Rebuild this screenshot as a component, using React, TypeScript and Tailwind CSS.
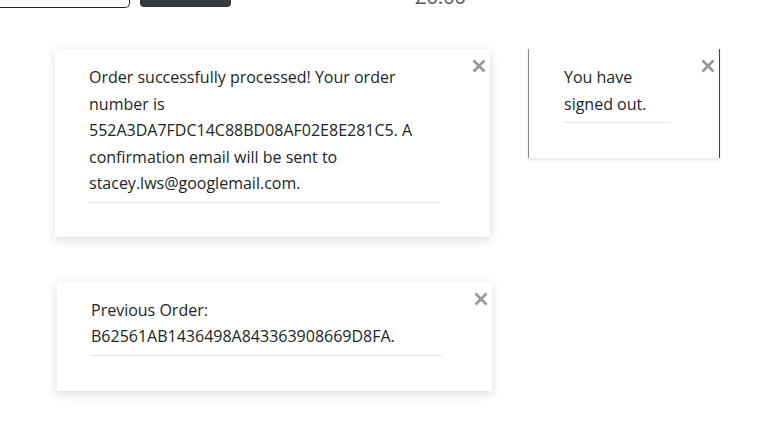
import React from 'react'

const font = { fontFamily: '"Open Sans", "Noto Sans", sans-serif' }

const CloseBtn = () => (
  <button className="absolute right-0 top-[6px] w-[22px] h-[22px] flex items-center justify-center text-[#999]" aria-label="Close">
    <svg width="14" height="14" viewBox="0 0 14 14">
      <path d="M1.5 1.5 L12.5 12.5 M12.5 1.5 L1.5 12.5" stroke="currentColor" strokeWidth="2.8" strokeLinecap="butt" />
    </svg>
  </button>
)

const Toast = ({ className, textWidth, children }: { className: string; textWidth: string; children: React.ReactNode }) => (
  <div className={`relative bg-white ${className}`}>
    <CloseBtn />
    <div className={`${textWidth} border-b border-[#e5e5e5] pb-[5px]`}>
      {children}
    </div>
  </div>
)

export default function App() {
  return (
    <div className="w-[778px] h-[432px] bg-white overflow-hidden text-[#212529]" style={font}>
      {/* top bar, scrolled mostly out of view */}
      <div className="flex items-end h-[8px]">
        <div className="w-[130px] h-[8px] border border-t-0 border-l-0 border-[#222] rounded-br-[5px]" />
        <div className="ml-[10px] w-[91px] h-[7px] bg-[#343a40] rounded-b-[4px] self-start" />
        <div className="ml-[184px] h-[8px] overflow-hidden">
          <div className="-mt-[14px] text-[20px] leading-[22px] text-[#555]">£0.00</div>
        </div>
      </div>

      <div className="flex items-start mt-[41px] ml-[55px]">
        <Toast
          className="w-[435px] pl-[34px] pt-[15px] pb-[34px] shadow-[0_3px_10px_rgba(0,0,0,0.15)]"
          textWidth="w-[350px]"
        >
          <p className="text-[16px] leading-[26.5px]">
            Order successfully processed! Your order number is 552A3DA7FDC14C88BD08AF02E8E281C5. A confirmation email will be sent to stacey.lws@googlemail.com.
          </p>
        </Toast>

        <Toast
          className="ml-[38px] w-[192px] pl-[35px] pt-[15px] pb-[35px] border-l border-r border-l-[#888] border-r-[#444] shadow-[0_2px_3px_rgba(120,90,60,0.15)]"
          textWidth="w-[106px]"
        >
          <p className="text-[16px] leading-[26.5px]">You have signed out.</p>
        </Toast>
      </div>

      <div className="mt-[45px] ml-[57px]">
        <Toast
          className="w-[435px] pl-[34px] pt-[15px] pb-[35px] shadow-[0_3px_10px_rgba(0,0,0,0.15)]"
          textWidth="w-[351px]"
        >
          <p className="text-[16px] leading-[26.5px]">
            Previous Order: B62561AB1436498A843363908669D8FA.
          </p>
        </Toast>
      </div>
    </div>
  )
}
